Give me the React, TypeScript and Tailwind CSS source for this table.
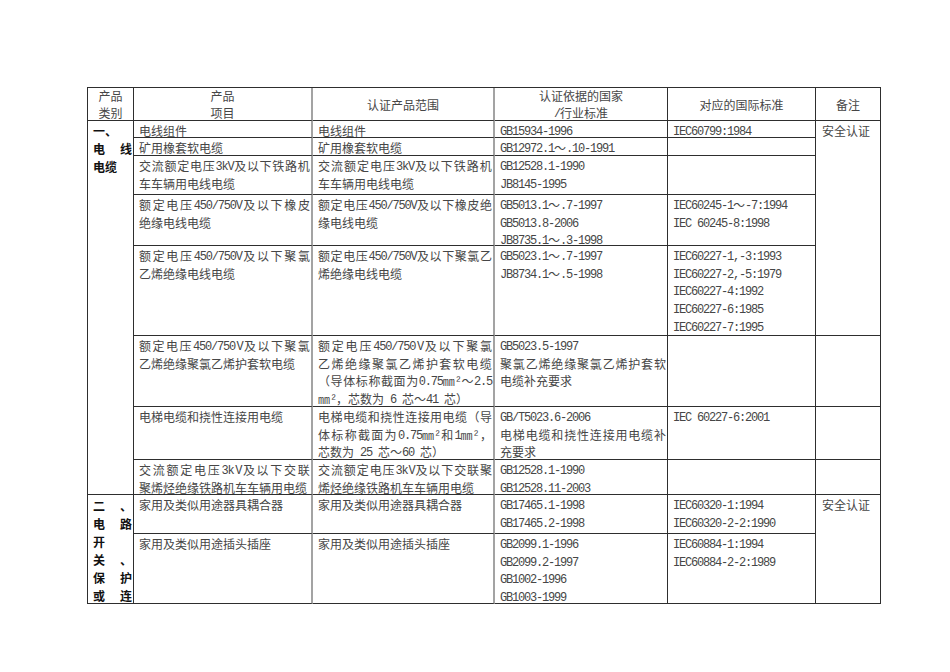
import { Fragment } from 'react';

const latin = /^[\x20-\x7e²]+$/;

// Latin runs get a narrow mono face (SimSun half-width look), CJK falls to Noto
const Txt = ({ s }: { s: string }) => (
  <>
    {s.split(/([\x20-\x7e²]+)/).map((p, i) =>
      latin.test(p) ? (
        <span
          key={i}
          className="align-[1px] font-['Liberation_Mono','Noto_Sans_CJK_SC',monospace] text-[12px] leading-none tracking-[-1.2px]"
        >
          {p}
        </span>
      ) : (
        <span key={i}>{p}</span>
      ),
    )}
  </>
);

// full lines in the source are stretched edge to edge: split into tokens and spread them
const Spread = ({ s }: { s: string }) => {
  const tokens = s.match(/[\x21-\x7e]*㎜²?|[\x21-\x7e]+|\S/g) ?? [];
  return (
    <div className="flex justify-between whitespace-nowrap">
      {tokens.map((t, i) => (
        <span key={i}>
          <Txt s={t} />
        </span>
      ))}
    </div>
  );
};

// a line starting with ^ is stretched to the full cell width
const Lines = ({ lines }: { lines: string[] }) => (
  <>
    {lines.map((l, i) =>
      l.startsWith('^') ? (
        <Spread key={i} s={l.slice(1)} />
      ) : (
        <div key={i} className="whitespace-nowrap">
          <Txt s={l} />
        </div>
      ),
    )}
  </>
);

type Row = { item: string[]; scope: string[]; national: string[]; intl: string[]; blankNote?: boolean };

const cableRows: Row[] = [
  { item: ['电线组件'], scope: ['电线组件'], national: ['GB15934-1996'], intl: ['IEC60799:1984'] },
  { item: ['矿用橡套软电缆'], scope: ['矿用橡套软电缆'], national: ['GB12972.1～.10-1991'], intl: [] },
  {
    item: ['^交流额定电压 3kV 及以下铁路机', '车车辆用电线电缆'],
    scope: ['^交流额定电压 3kV 及以下铁路机', '车车辆用电线电缆'],
    national: ['GB12528.1-1990', 'JB8145-1995'],
    intl: [],
  },
  {
    item: ['^额定电压 450/750V 及以下橡皮', '绝缘电线电缆'],
    scope: ['^额定电压 450/750V 及以下橡皮绝', '缘电线电缆'],
    national: ['GB5013.1～.7-1997', 'GB5013.8-2006', 'JB8735.1～.3-1998'],
    intl: ['IEC60245-1～-7:1994', 'IEC 60245-8:1998'],
  },
  {
    item: ['^额定电压 450/750V 及以下聚氯', '乙烯绝缘电线电缆'],
    scope: ['^额定电压 450/750V 及以下聚氯乙', '烯绝缘电线电缆'],
    national: ['GB5023.1～.7-1997', 'JB8734.1～.5-1998'],
    intl: ['IEC60227-1,-3:1993', 'IEC60227-2,-5:1979', 'IEC60227-4:1992', 'IEC60227-6:1985', 'IEC60227-7:1995'],
  },
  {
    item: ['^额定电压 450/750 V 及以下聚氯', '乙烯绝缘聚氯乙烯护套软电缆'],
    scope: ['^额定电压 450/750 V 及以下聚氯', '^乙烯绝缘聚氯乙烯护套软电缆', '^（导体标称截面为 0.75㎜²～2.5', '㎜²，芯数为 6 芯～41 芯）'],
    national: ['GB5023.5-1997', '^聚氯乙烯绝缘聚氯乙烯护套软', '电缆补充要求'],
    intl: [],
    blankNote: true,
  },
  {
    item: ['电梯电缆和挠性连接用电缆'],
    scope: ['^电梯电缆和挠性连接用电缆（导', '^体标称截面为 0.75㎜² 和 1㎜²，', '芯数为 25 芯～60 芯）'],
    national: ['GB/T5023.6-2006', '^电梯电缆和挠性连接用电缆补', '充要求'],
    intl: ['IEC 60227-6:2001'],
    blankNote: true,
  },
  {
    item: ['^交流额定电压 3k V 及以下交联', '聚烯烃绝缘铁路机车车辆用电缆'],
    scope: ['^交流额定电压 3k V 及以下交联聚', '烯烃绝缘铁路机车车辆用电缆'],
    national: ['GB12528.1-1990', 'GB12528.11-2003'],
    intl: [],
    blankNote: true,
  },
];

const switchRows: Row[] = [
  {
    item: ['家用及类似用途器具耦合器'],
    scope: ['家用及类似用途器具耦合器'],
    national: ['GB17465.1-1998', 'GB17465.2-1998'],
    intl: ['IEC60320-1:1994', 'IEC60320-2-2:1990'],
  },
  {
    item: ['家用及类似用途插头插座'],
    scope: ['家用及类似用途插头插座'],
    national: ['GB2099.1-1996', 'GB2099.2-1997', 'GB1002-1996', 'GB1003-1999'],
    intl: ['IEC60884-1:1994', 'IEC60884-2-2:1989'],
  },
];

const dark = 'border-r border-b border-[#2e2e2e]';
const grey = 'border-r-2 border-b border-r-[#a3a3a3] border-b-[#2e2e2e]';
const body = 'pl-[5px] pr-px pt-[1px] leading-[17.7px] text-[#464646]';

const Head = ({ lines, className }: { lines: string[]; className: string }) => (
  <div className={`flex flex-col items-center justify-center leading-[17px] text-[#464646] ${className}`}>
    <Lines lines={lines} />
  </div>
);

const Cells = ({ row }: { row: Row }) => (
  <>
    <div className={`${grey} ${body}`}>
      <Lines lines={row.item} />
    </div>
    <div className={`${grey} ${body}`}>
      <Lines lines={row.scope} />
    </div>
    <div className={`${dark} ${body}`}>
      <Lines lines={row.national} />
    </div>
    <div className={`${dark} ${body}`}>
      <Lines lines={row.intl} />
    </div>
    {row.blankNote && <div className={dark} />}
  </>
);

const Pair = ({ a, b }: { a: string; b?: string }) => (
  <div className="flex justify-between">
    <span>{a}</span>
    {b && <span>{b}</span>}
  </div>
);

const Note = ({ span }: { span: string }) => (
  <div className={`${span} ${dark} pl-[6px] pt-[1px] leading-[17.7px] text-[#464646]`}>安全认证</div>
);

const App = () => (
  <div className="min-h-screen bg-white pl-[87px] pt-[87px] font-['Noto_Sans_CJK_SC',sans-serif] text-[12px]">
    <div className="grid w-max grid-cols-[46px_179px_182px_173px_148px_65px] grid-rows-[33px_17px_18px_39px_51px_90px_71px_53px_35px_39px_70px] border-l border-t border-[#2e2e2e]">
      {/* header */}
      <Head lines={['产品', '类别']} className={dark} />
      <Head lines={['产品', '项目']} className={grey} />
      <Head lines={['认证产品范围']} className={grey} />
      <Head lines={['认证依据的国家', '/行业标准']} className={dark} />
      <Head lines={['对应的国际标准']} className={dark} />
      <Head lines={['备注']} className={dark} />

      {/* 一、电线电缆 */}
      {cableRows.map((row, i) => (
        <Fragment key={i}>
          {i === 0 && (
            <div className={`row-span-8 ${dark} pl-[5px] pr-px pt-[1px] font-bold leading-[18px] text-[#111]`}>
              <div>一、</div>
              <Pair a="电" b="线" />
              <div>电缆</div>
            </div>
          )}
          <Cells row={row} />
          {i === 0 && <Note span="row-span-5" />}
        </Fragment>
      ))}

      {/* 二、电路开关、保护或连接 */}
      {switchRows.map((row, i) => (
        <Fragment key={i}>
          {i === 0 && (
            <div className={`row-span-2 ${dark} pl-[5px] pr-px pt-[2px] font-bold leading-[18px] text-[#111]`}>
              <Pair a="二" b="、" />
              <Pair a="电" b="路" />
              <Pair a="开" />
              <Pair a="关" b="、" />
              <Pair a="保" b="护" />
              <Pair a="或" b="连" />
            </div>
          )}
          <Cells row={row} />
          {i === 0 && <Note span="row-span-2" />}
        </Fragment>
      ))}
    </div>
  </div>
);

export default App;
